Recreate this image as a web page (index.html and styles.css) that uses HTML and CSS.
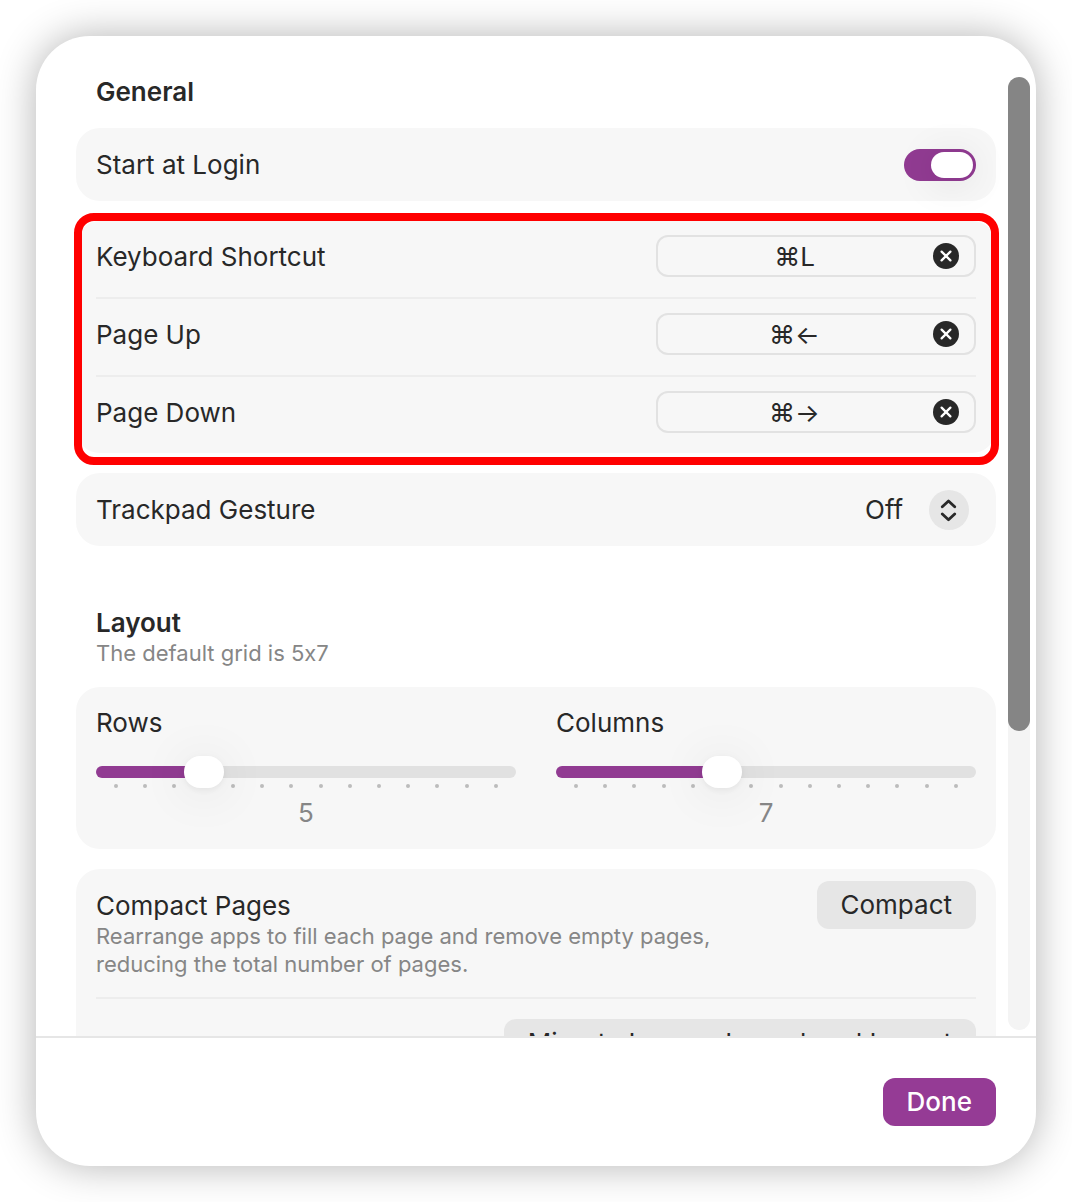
FILE: index.html
```html
<!DOCTYPE html>
<html lang="en">

<head>
  <meta charset="UTF-8" />
  <meta name="viewport" content="width=device-width, initial-scale=1.0" />
  <title>Settings</title>
  <link rel="stylesheet" href="styles.css">
</head>

<body>

  <div class="window">

    <div class="scroll-area">
      <main class="content">

        <h2>General</h2>

        <div class="card">
          <div class="row">
            <label for="login">Start at Login</label>
            <input type="checkbox" id="login" class="switch" checked />
          </div>
        </div>

        <div class="card shortcuts">
          <div class="row">
            <label for="shortcut">Keyboard Shortcut</label>
            <div class="field">
              <input type="text" id="shortcut" value="⌘L" readonly />
              <button class="clear" aria-label="Clear">
                <svg viewBox="0 0 26 26"><circle cx="13" cy="13" r="13" /><path d="M8.6 8.6l8.8 8.8M17.4 8.6l-8.8 8.8" /></svg>
              </button>
            </div>
          </div>
          <div class="row">
            <label for="page-up">Page Up</label>
            <div class="field">
              <input type="text" id="page-up" value="⌘←" readonly />
              <button class="clear" aria-label="Clear">
                <svg viewBox="0 0 26 26"><circle cx="13" cy="13" r="13" /><path d="M8.6 8.6l8.8 8.8M17.4 8.6l-8.8 8.8" /></svg>
              </button>
            </div>
          </div>
          <div class="row">
            <label for="page-down">Page Down</label>
            <div class="field">
              <input type="text" id="page-down" value="⌘→" readonly />
              <button class="clear" aria-label="Clear">
                <svg viewBox="0 0 26 26"><circle cx="13" cy="13" r="13" /><path d="M8.6 8.6l8.8 8.8M17.4 8.6l-8.8 8.8" /></svg>
              </button>
            </div>
          </div>
          <div class="highlight"></div>
        </div>

        <div class="card">
          <div class="row">
            <label for="gesture">Trackpad Gesture</label>
            <div class="picker">
              <select id="gesture">
                <option>Off</option>
              </select>
              <svg viewBox="0 0 40 40"><circle cx="20" cy="20" r="20" /><path d="M13.3 16.8l6.2-5.8 6.2 5.8M13.3 24l6.2 5.8 6.2-5.8" /></svg>
            </div>
          </div>
        </div>

        <div class="section-title">
          <h2>Layout</h2>
          <p>The default grid is 5x7</p>
        </div>

        <div class="card grid-size">
          <div class="slider">
            <label for="rows">Rows</label>
            <input type="range" id="rows" min="2" max="15" value="5" style="--pos: 3" />
            <div class="ticks"><i></i><i></i><i></i><i></i><i></i><i></i><i></i><i></i><i></i><i></i><i></i><i></i><i></i><i></i></div>
            <output for="rows">5</output>
          </div>
          <div class="slider">
            <label for="columns">Columns</label>
            <input type="range" id="columns" min="2" max="15" value="7" style="--pos: 5" />
            <div class="ticks"><i></i><i></i><i></i><i></i><i></i><i></i><i></i><i></i><i></i><i></i><i></i><i></i><i></i><i></i></div>
            <output for="columns">7</output>
          </div>
        </div>

        <div class="card pages">
          <div class="row">
            <div class="text">
              <h3>Compact Pages</h3>
              <p>Rearrange apps to fill each page and remove empty pages, reducing the total number of pages.</p>
            </div>
            <button class="btn">Compact</button>
          </div>
          <div class="row">
            <button class="btn">Migrate Legacy Launchpad Layout</button>
          </div>
        </div>

      </main>

      <div class="scrollbar">
        <div class="thumb"></div>
      </div>
    </div>

    <footer>
      <button class="btn primary">Done</button>
    </footer>

  </div>

  <script>
    document.querySelectorAll(".slider input").forEach((input) => {
      input.addEventListener("input", () => {
        input.style.setProperty("--pos", input.value - input.min);
        input.parentElement.querySelector("output").textContent = input.value;
      });
    });
  </script>

</body>

</html>
```
FILE: styles.css
```css
* {
  padding: 0;
  margin: 0;
  box-sizing: border-box;
}

body {
  padding: 36px;
  background: #ffffff;
}

body,
input,
select,
button {
  font-family: Inter, "Liberation Sans", sans-serif;
  font-size: 26px;
  font-variant-ligatures: no-contextual;
  line-height: 32px;
  color: #282828;
}

.window {
  display: flex;
  flex-direction: column;
  height: calc(100vh - 72px);
  border-radius: 54px;
  background: #ffffff;
  box-shadow: 0 0 40px rgba(0, 0, 0, 0.3);
  overflow: hidden;
}

.scroll-area {
  display: flex;
  flex: 1;
  min-height: 0;
  overflow: hidden;
}

.content {
  flex: 1;
  padding: 40px 0 0 40px;
}

h2 {
  padding: 0 20px;
  font-size: 26px;
  font-weight: 600;
}

h3 {
  font-size: 26px;
  font-weight: 400;
}

p {
  font-size: 22px;
  line-height: 28px;
  color: #868686;
}

.section-title {
  margin-top: 61px;
}

.section-title p {
  padding: 0 20px;
}

/* Cards */
.card {
  position: relative;
  margin-top: 20px;
  padding: 0 20px;
  border-radius: 24px;
  background: #f7f7f7;
}

.row {
  display: flex;
  align-items: center;
  justify-content: space-between;
  min-height: 73px;
}

.row + .row {
  border-top: 2px solid #ededed;
}

/* Start at Login */
.switch {
  appearance: none;
  display: flex;
  justify-content: flex-end;
  width: 72px;
  height: 32px;
  padding: 3px;
  border-radius: 16px;
  background: #913b92;
}

.switch::before {
  content: "";
  width: 42px;
  border-radius: 13px;
  background: #ffffff;
  box-shadow: 0 4px 40px rgba(0, 0, 0, 0.12);
}

.switch:not(:checked) {
  justify-content: flex-start;
  background: #d9d9d9;
}

/* Shortcut fields */
.shortcuts .row {
  padding: 14px 0 20px;
}

.shortcuts label,
.field input {
  padding-top: 2px;
}

.field {
  display: flex;
  align-items: center;
  width: 320px;
  height: 42px;
  padding-right: 15px;
  border: 2px solid #e2e2e2;
  border-radius: 12px;
}

.field input {
  flex: 1;
  min-width: 0;
  border: none;
  background: none;
  text-align: center;
  outline: none;
}

.clear {
  width: 26px;
  height: 26px;
  margin-left: 2px;
  border: none;
  background: none;
}

.clear svg {
  display: block;
  fill: #282828;
}

.clear path {
  stroke: #ffffff;
  stroke-width: 2.3;
  stroke-linecap: round;
}

.highlight {
  position: absolute;
  inset: -8px -3px -12px -2px;
  border: 8px solid #ff0000;
  border-radius: 20px;
  pointer-events: none;
}

/* Trackpad Gesture */
.picker {
  position: relative;
  margin-right: 7px;
}

.picker select {
  appearance: none;
  display: block;
  height: 40px;
  padding-right: 65px;
  border: none;
  background: none;
}

.picker svg {
  position: absolute;
  top: 0;
  right: 0;
  width: 40px;
  height: 40px;
  pointer-events: none;
}

.picker circle {
  fill: #e6e6e6;
}

.picker path {
  fill: none;
  stroke: #282828;
  stroke-width: 2.8;
  stroke-linecap: round;
  stroke-linejoin: round;
}

/* Rows and columns */
.grid-size {
  display: grid;
  grid-template-columns: 1fr 1fr;
  gap: 40px;
  padding: 20px;
}

.slider {
  display: flex;
  flex-direction: column;
}

.slider input {
  --fill: calc(20px + (100% - 40px) * var(--pos) / 13);
  appearance: none;
  position: relative;
  z-index: 1;
  width: 100%;
  height: 32px;
  margin-top: 17px;
  background: none;
}

.slider input::-webkit-slider-runnable-track {
  height: 12px;
  border-radius: 6px;
  background: linear-gradient(to right, #913b92 var(--fill), #e1e1e1 var(--fill));
}

.slider input::-webkit-slider-thumb {
  appearance: none;
  width: 40px;
  height: 32px;
  margin-top: -10px;
  border-radius: 16px;
  background: #ffffff;
  box-shadow: 0 2px 6px rgba(0, 0, 0, 0.06), 0 4px 50px rgba(0, 0, 0, 0.1);
}

.ticks {
  display: flex;
  justify-content: space-between;
  margin-top: -4px;
  padding: 0 18px;
}

.ticks i {
  width: 4px;
  height: 4px;
  border-radius: 2px;
  background: #bcbcbc;
}

.slider output {
  margin-top: 9px;
  text-align: center;
  color: #868686;
}

/* Pages */
.pages .row {
  align-items: flex-start;
  padding: 12px 0 19px;
}

.pages .row + .row {
  justify-content: flex-end;
  padding: 20px 0;
}

.pages .text {
  padding-top: 9px;
}

.pages .text p {
  max-width: 640px;
}

.btn {
  height: 48px;
  padding: 0 24px;
  border: none;
  border-radius: 12px;
  background: #e6e6e6;
}

.primary {
  background: #953b95;
  color: #ffffff;
  font-weight: 500;
}

/* Scrollbar */
.scrollbar {
  width: 22px;
  margin: 41px 6px 6px 12px;
  border-radius: 11px;
  background: #f4f4f4;
}

.thumb {
  height: 68.6%;
  border-radius: 11px;
  background: #858585;
}

footer {
  display: flex;
  justify-content: flex-end;
  padding: 40px;
  border-top: 2px solid #e6e6e6;
}
```
